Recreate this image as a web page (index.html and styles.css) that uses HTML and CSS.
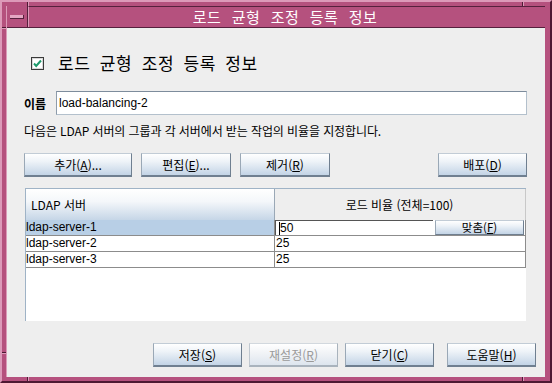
FILE: index.html
```html
<!DOCTYPE html>
<html lang="ko">
<head>
<meta charset="utf-8">
<title>로드 균형 조정 등록 정보</title>
<link rel="stylesheet" href="styles.css">
</head>
<body>
<div class="frame">
  <span class="notch n-top-l"></span>
  <span class="notch n-top-r"></span>
  <span class="notch n-bot-l"></span>
  <span class="notch n-bot-r"></span>
  <span class="notch n-left-t"></span>
  <span class="notch n-left-b"></span>
  <div class="window">
    <div class="titlebar">
      <div class="menubtn"><span class="minus"></span></div>
      <div class="title">로드 균형 조정 등록 정보</div>
    </div>
    <div class="content">
      <div class="heading">
        <span class="check">
          <svg width="13" height="13" viewBox="0 0 13 13">
            <rect x="0.5" y="0.5" width="12" height="12" fill="#ffffff" stroke="#3a3a3a"/>
            <rect x="1.5" y="1.5" width="10" height="10" fill="none" stroke="#d8d8d8"/>
            <path d="M3 6.5 L5.2 9 L10 3.5" fill="none" stroke="#1d9a6c" stroke-width="2"/>
          </svg>
        </span>
        <span class="htext">로드 균형 조정 등록 정보</span>
      </div>
      <div class="namerow">
        <span class="label">이름</span>
        <div class="input">load-balancing-2</div>
      </div>
      <p class="desc">다음은 LDAP 서버의 그룹과 각 서버에서 받는 작업의 비율을 지정합니다.</p>
      <div class="btnrow">
        <button class="btn b-add">추가(<u>A</u>)...</button>
        <button class="btn b-edit">편집(<u>E</u>)...</button>
        <button class="btn b-del">제거(<u>R</u>)</button>
        <span class="spacer"></span>
        <button class="btn b-dep">배포(<u>D</u>)</button>
      </div>
      <div class="table">
        <div class="thead">
          <div class="th th1">LDAP 서버</div>
          <div class="th th2">로드 비율 (전체=100)</div>
        </div>
        <div class="row sel">
          <div class="td c1">ldap-server-1</div>
          <div class="td c2 editcell">
            <span class="editor"><span class="caret"></span>50</span>
            <button class="btn b-fit">맞춤(<u>F</u>)</button>
          </div>
        </div>
        <div class="row">
          <div class="td c1">ldap-server-2</div>
          <div class="td c2">25</div>
        </div>
        <div class="row">
          <div class="td c1">ldap-server-3</div>
          <div class="td c2">25</div>
        </div>
      </div>
      <div class="footer">
        <button class="btn b-foot">저장(<u>S</u>)</button>
        <button class="btn b-foot disabled">재설정(<u>R</u>)</button>
        <button class="btn b-foot">닫기(<u>C</u>)</button>
        <button class="btn b-foot b-help">도움말(<u>H</u>)</button>
      </div>
    </div>
  </div>
</div>
</body>
</html>
```

FILE: styles.css
```css
html, body {
  margin: 0;
  padding: 0;
}
body {
  width: 552px;
  height: 383px;
  overflow: hidden;
  font-family: "Noto Sans CJK KR", sans-serif;
}
.frame {
  position: relative;
  box-sizing: border-box;
  width: 552px;
  height: 383px;
  background: #b5517e;
  border-style: solid;
  border-width: 2px;
  border-color: #dc9ab9 #4e1933 #4e1933 #dc9ab9;
  padding: 4px 5px 4px 4px;
}
.notch {
  position: absolute;
  background: #4e1933;
  box-shadow: 1px 0 0 #dc9ab9;
  z-index: 1;
}
.n-top-l { left: 25px; top: 0; width: 1px; height: 4px; }
.n-top-r { left: 520px; top: 0; width: 1px; height: 4px; }
.n-bot-l { left: 25px; bottom: 0; width: 1px; height: 4px; }
.n-bot-r { left: 520px; bottom: 0; width: 1px; height: 4px; }
.n-left-t { left: 0; top: 25px; width: 4px; height: 1px; box-shadow: 0 1px 0 #dc9ab9; }
.n-left-b { left: 0; top: 350px; width: 4px; height: 1px; box-shadow: 0 1px 0 #dc9ab9; }

.window {
  height: 100%;
  display: flex;
  flex-direction: column;
  border-left: 1px solid #dc9ab9;
  box-sizing: border-box;
}
.titlebar {
  height: 22px;
  box-sizing: border-box;
  display: flex;
  border-bottom: 1px solid #56203d;
  flex: none;
}
.menubtn {
  width: 20px;
  display: flex;
  align-items: center;
  justify-content: center;
  border-right: 1px solid #56203d;
}
.minus {
  width: 13px;
  height: 3px;
  background: #e4a7c3;
  border-right: 1px solid #56203d;
  border-bottom: 1px solid #56203d;
}
.title {
  flex: 1;
  border-left: 1px solid #dc9ab9;
  border-top: 1px solid #56203d;
  color: #ffffff;
  font-size: 15px;
  line-height: 19px;
  word-spacing: 6px;
  letter-spacing: 0.4px;
  text-align: center;
  padding-right: 4px;
}
.content {
  flex: 1;
  background: #eeeeee;
  padding: 0 18px 0 17px;
  display: flex;
  flex-direction: column;
}
.heading {
  height: 20px;
  margin-top: 24px;
  display: flex;
  align-items: center;
  padding-left: 7px;
}
.check {
  width: 13px;
  height: 13px;
  display: block;
  margin-top: 3px;
}
.check svg { display: block; }
.htext {
  margin-left: 14px;
  font-size: 17px;
  word-spacing: 4px;
  letter-spacing: 0.6px;
  color: #000;
}
.namerow {
  margin-top: 19px;
  display: flex;
  align-items: center;
  height: 24px;
}
.label {
  width: 32px;
  font-size: 12px;
  font-weight: bold;
  color: #000;
}
.input {
  flex: 1;
  height: 24px;
  box-sizing: border-box;
  background: #ffffff;
  border: 1px solid #b3c0cc;
  border-top-color: #7d8c9c;
  border-left-color: #8e9cab;
  font-family: "Liberation Sans", Arial, sans-serif;
  font-size: 12px;
  line-height: 22px;
  padding-left: 2px;
  color: #000;
}
.desc {
  margin: 8px 0 0 0;
  font-size: 12px;
  line-height: 16px;
  letter-spacing: -0.1px;
  color: #000;
}
.btnrow {
  margin-top: 14px;
  display: flex;
  gap: 9px;
  height: 24px;
}
.spacer { flex: 1; }
.btn {
  box-sizing: border-box;
  height: 24px;
  padding: 0;
  margin: 0;
  font-family: "Noto Sans CJK KR", sans-serif;
  font-size: 12px;
  line-height: 20px;
  color: #000;
  background: linear-gradient(#ffffff 0%, #eef3f8 35%, #c3d4e6 100%);
  border: 1px solid;
  border-color: #c2ccd6 #6f7f90 #6f7f90 #9aa8b6;
  border-bottom-width: 2px;
  text-align: center;
}
.btn u { text-underline-offset: 1px; }
.b-add { width: 108px; }
.b-edit { width: 90px; }
.b-del { width: 90px; }
.b-dep { width: 89px; }
.table {
  margin-top: 11px;
  margin-left: 1px;
  width: 501px;
  height: 133px;
  box-sizing: border-box;
  background: #ffffff;
  border-top: 1px solid #9fb3c6;
  border-left: 1px solid #9fb3c6;
}
.thead {
  display: grid;
  grid-template-columns: 249px 1fr;
  height: 31px;
  box-sizing: border-box;
  border-bottom: 1px solid #8a9aab;
}
.th {
  font-size: 12px;
  line-height: 31px;
  color: #000;
}
.th1 {
  padding-left: 5px;
  background: linear-gradient(#ffffff 0%, #f4f7fa 40%, #c6d6e7 100%);
  border-right: 1px solid #9aa8b6;
}
.th2 {
  text-align: center;
  background: #eeeeee;
  border-right: 1px solid #c8c8c8;
  padding-right: 1px;
}
.row {
  display: grid;
  grid-template-columns: 249px 1fr;
  height: 16px;
  box-sizing: border-box;
  border-bottom: 1px solid #8c8c8c;
  border-right: 1px solid #8c8c8c;
}
.td {
  font-family: "Liberation Sans", Arial, sans-serif;
  font-size: 12px;
  line-height: 15px;
  color: #000;
  white-space: nowrap;
  overflow: hidden;
}
.c1 {
  border-right: 1px solid #8c8c8c;
}
.c2 { padding-left: 1px; }
.sel .c1 { background: #b8cfe6; }
.editcell {
  display: flex;
  padding-left: 0;
  gap: 2px;
}
.editor {
  width: 158px;
  box-sizing: border-box;
  border-top: 1px solid #555555;
  border-left: 1px solid #555555;
  background: #ffffff;
  display: flex;
  align-items: center;
  padding-left: 3px;
  line-height: 14px;
}
.caret {
  width: 1px;
  height: 13px;
  background: #000;
}
.b-fit {
  width: 89px;
  height: 15px;
  line-height: 13px;
  font-size: 11.5px;
  border-bottom-width: 1px;
}
.footer {
  margin-top: 22px;
  margin-right: -9px;
  display: flex;
  justify-content: flex-end;
  gap: 7px;
}
.b-foot { width: 89px; }
.b-help { margin-left: 6px; }
.disabled {
  color: #9a9a9a;
  background: linear-gradient(#ffffff 0%, #f2f4f7 40%, #dde5ee 100%);
  border-color: #d2d8de #a9b3bd #a9b3bd #c0c8d0;
}
```
